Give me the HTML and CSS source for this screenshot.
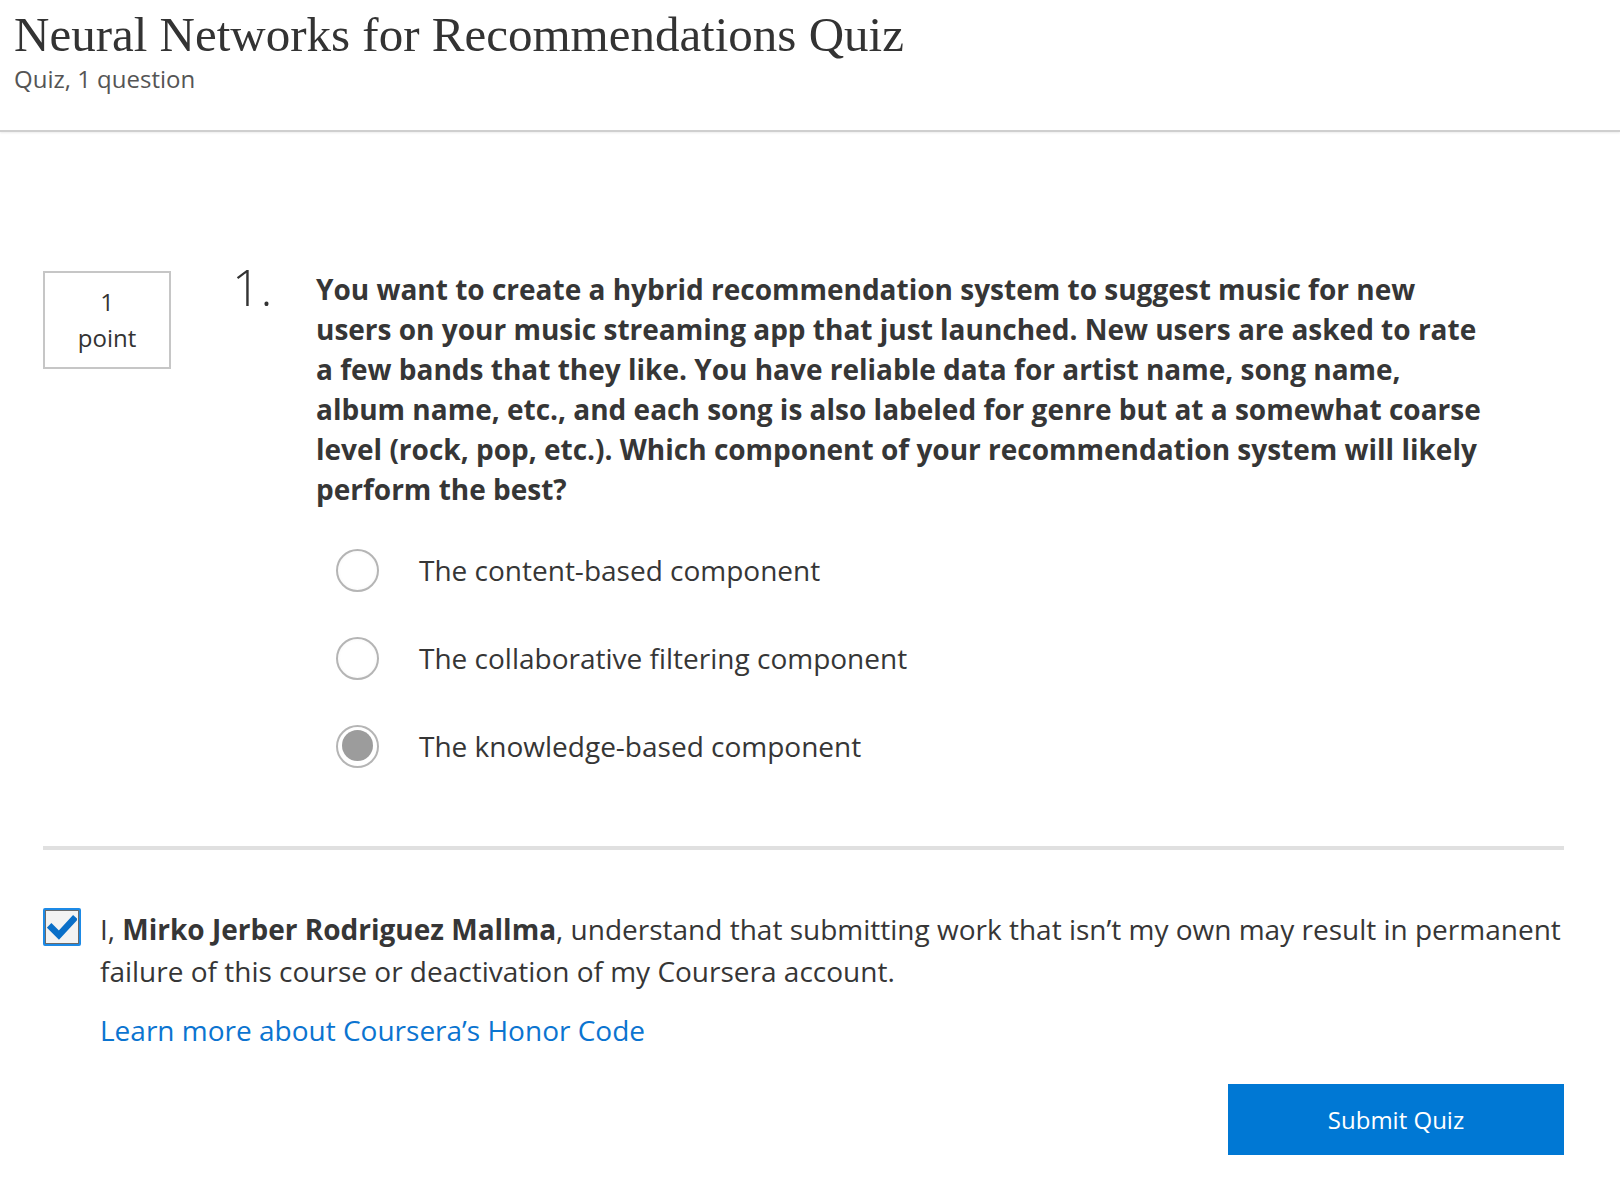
FILE: index.html
```html
<!DOCTYPE html>
<html lang="en">
<head>
<meta charset="utf-8">
<title>Neural Networks for Recommendations Quiz</title>
<link rel="stylesheet" href="styles.css">
</head>
<body>
<header class="page-header">
  <h1 class="quiz-title">Neural Networks for Recommendations Quiz</h1>
  <div class="quiz-meta">Quiz, 1 question</div>
</header>

<main class="quiz-body">
  <section class="question">
    <div class="points">
      <span>1</span>
      <span>point</span>
    </div>
    <div class="q-number">1.</div>
    <div class="q-content">
      <p class="q-text">You want to create a hybrid recommendation system to suggest music for new<br>users on your music streaming app that just launched. New users are asked to rate<br>a few bands that they like. You have reliable data for artist name, song name,<br>album name, etc., and each song is also labeled for genre but at a somewhat coarse<br>level (rock, pop, etc.). Which component of your recommendation system will likely<br>perform the best?</p>
      <ul class="options">
        <li class="option"><span class="radio"></span><span class="opt-label">The content-based component</span></li>
        <li class="option"><span class="radio"></span><span class="opt-label">The collaborative filtering component</span></li>
        <li class="option"><span class="radio checked"></span><span class="opt-label">The knowledge-based component</span></li>
      </ul>
    </div>
  </section>

  <hr class="divider">

  <section class="honor">
    <span class="checkbox">
      <svg viewBox="0 0 24 24" width="30" height="30"><path d="M3.5 12.5 L9.5 18.5 L21 6" fill="none" stroke="#0a6fc8" stroke-width="5.2" stroke-linecap="square"/></svg>
    </span>
    <div class="honor-text">
      <p class="pledge">I, <strong>Mirko Jerber Rodriguez Mallma</strong>, understand that submitting work that isn’t my own may result in permanent failure of this course or deactivation of my Coursera account.</p>
      <a class="honor-link" href="#">Learn more about Coursera’s Honor Code</a>
    </div>
  </section>

  <div class="actions">
    <button class="submit" type="button">Submit Quiz</button>
  </div>
</main>
</body>
</html>
```

FILE: styles.css
```css
* { box-sizing: border-box; }

html, body {
  margin: 0;
  padding: 0;
  background: #ffffff;
  color: #363636;
  font-family: "Open Sans", "Noto Sans", sans-serif;
}

.page-header {
  padding: 8px 0 0 14px;
  height: 132px;
  border-bottom: 2px solid #cfcfcf;
  box-shadow: 0 1px 2px rgba(0,0,0,0.08);
}

.quiz-title {
  margin: 0;
  font-family: "Liberation Serif", "DejaVu Serif", serif;
  font-weight: 400;
  font-size: 49px;
  line-height: 54px;
  color: #333333;
}

.quiz-meta {
  margin-top: 2px;
  font-size: 24px;
  line-height: 30px;
  color: #555555;
}

.quiz-body {
  padding: 139px 56px 40px 43px;
}

.question {
  display: flex;
  align-items: flex-start;
}

.points {
  width: 128px;
  height: 98px;
  border: 2px solid #c6c6c6;
  display: flex;
  flex-direction: column;
  align-items: center;
  justify-content: center;
  font-size: 24px;
  line-height: 36px;
  color: #333;
  flex-shrink: 0;
}

.q-number {
  width: 145px;
  padding-left: 61px;
  margin-top: -14px;
  font-size: 50px;
  font-weight: 300;
  line-height: 60px;
  color: #333;
  flex-shrink: 0;
}

.q-content {
  width: 1230px;
}

.q-text {
  margin: -2px 0 0 0;
  font-size: 28px;
  font-weight: 700;
  line-height: 40px;
  color: #363636;
}

.options {
  list-style: none;
  margin: 17px 0 0 0;
  padding: 0 0 0 20px;
}

.option {
  display: flex;
  align-items: center;
  height: 88px;
}

.radio {
  width: 43px;
  height: 43px;
  border-radius: 50%;
  border: 2.5px solid #b5b5b5;
  background: radial-gradient(circle, #ffffff 60%, #efefef 100%);
  flex-shrink: 0;
  position: relative;
}

.radio.checked {
  background: #ffffff;
}

.radio.checked::after {
  content: "";
  position: absolute;
  left: 3.5px;
  top: 3.5px;
  width: 31px;
  height: 31px;
  border-radius: 50%;
  background: #9c9c9c;
}

.opt-label {
  margin-left: 40px;
  font-size: 28px;
  line-height: 40px;
  color: #363636;
}

.divider {
  border: 0;
  height: 4px;
  background: #e0e0e0;
  margin: 56px 0 0 0;
}

.honor {
  display: flex;
  align-items: flex-start;
  margin-top: 58px;
}

.checkbox {
  width: 38px;
  height: 38px;
  flex-shrink: 0;
  border: 2px solid #1d8ae6;
  box-shadow: inset 0 0 0 1px #6a6a6a;
  background: #f3f3f3;
  display: flex;
  align-items: center;
  justify-content: center;
  border-radius: 2px;
}

.honor-text {
  margin-left: 19px;
}

.pledge {
  margin: 0;
  font-size: 28px;
  line-height: 42px;
  color: #363636;
}

.pledge strong {
  font-weight: 700;
}

.honor-link {
  display: inline-block;
  margin-top: 17px;
  font-size: 28px;
  line-height: 42px;
  color: #0b74d0;
  text-decoration: none;
}

.actions {
  display: flex;
  justify-content: flex-end;
  margin-top: 33px;
}

.submit {
  width: 336px;
  height: 71px;
  border: 0;
  border-radius: 0;
  background: #0078d4;
  color: #ffffff;
  font-family: "Open Sans", "Noto Sans", sans-serif;
  font-size: 24px;
  cursor: pointer;
}
```
